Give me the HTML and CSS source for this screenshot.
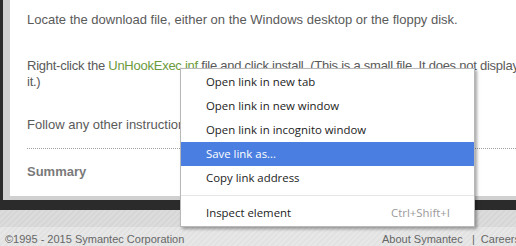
FILE: index.html
```html
<!DOCTYPE html>
<html lang="en">
<head>
    <meta charset="UTF-8">
    <title>UnHookExec - Symantec</title>
    <link rel="stylesheet" href="styles.css">
</head>
<body>

<div class="page">
    <div class="frame">
        <div class="frame-inner">
            <div class="content">
                <p class="step">Locate the download file, either on the Windows desktop or the floppy disk.</p>
                <p class="step step-install">Right-click the <a href="#" class="file-link">UnHookExec.inf</a> file and click install. (This is a small file. It does not display a message when you install<br>it.)</p>
                <p class="step">Follow any other instructions that appear on the screen.</p>
                <div class="divider"></div>
                <h3 class="summary">Summary</h3>
            </div>
        </div>
    </div>

    <div class="band"></div>

    <footer>
        <span>&copy;1995 - 2015 Symantec Corporation</span>
        <span class="footer-links">About Symantec &nbsp;&nbsp;|&nbsp; Careers</span>
    </footer>
</div>

<!-- Контекстное меню -->
<div class="context-menu">
    <div class="menu-item">Open link in new tab</div>
    <div class="menu-item">Open link in new window</div>
    <div class="menu-item">Open link in incognito window</div>
    <div class="menu-item active">Save link as...</div>
    <div class="menu-item">Copy link address</div>
    <div class="menu-sep"></div>
    <div class="menu-item">Inspect element <span class="shortcut">Ctrl+Shift+I</span></div>
</div>

</body>
</html>
```

FILE: styles.css
```css
body {
    margin: 0;
    font-family: 'Liberation Sans', Arial, sans-serif;
    background: #e4e4e4;
    overflow: hidden;
    position: relative;
}

.page {
    width: 540px;
}

.frame {
    background-color: #2b2b2b;
    padding: 0 0 10px 3px;
}

.frame-inner {
    background-color: #d0d0d0;
    padding: 0 0 4px 7px;
}

.content {
    background-color: #fff;
    height: 196px;
    padding: 12px 0 0 17px;
    box-sizing: border-box;
    color: #5a5a5a;
    font-size: 13px;
    line-height: 16px;
}

.step {
    margin: 0 0 30px;
    white-space: nowrap;
}

.step-install {
    margin-bottom: 27px;
    letter-spacing: -0.25px;
}

.step:nth-child(3) {
    margin-bottom: 15px;
}

.file-link {
    color: #6b9a3c;
    text-decoration: none;
}

.divider {
    border-top: 1px dotted #a0a0a0;
    margin-right: 10px;
}

.summary {
    margin: 15px 0 0;
    font-size: 13px;
    line-height: 16px;
    color: #7a7a7a;
}

.band {
    height: 17px;
    background: repeating-linear-gradient(135deg, #d6d6d6 0, #d6d6d6 2px, #dcdcdc 2px, #dcdcdc 4px);
}

footer {
    height: 19px;
    display: flex;
    justify-content: space-between;
    align-items: flex-end;
    padding: 0 20px 0 5px;
    font-size: 11px;
    line-height: 13px;
    color: #666;
    background: repeating-linear-gradient(135deg, #e2e2e2 0, #e2e2e2 2px, #e7e7e7 2px, #e7e7e7 4px);
}

/* Контекстное меню */
.context-menu {
    position: absolute;
    left: 180px;
    top: 68px;
    width: 293px;
    padding: 1px 0;
    background-color: #fff;
    border: 1px solid #b8b8b8;
    box-shadow: 2px 2px 3px rgba(0, 0, 0, 0.35);
    font-family: 'Open Sans', 'Noto Sans', sans-serif;
    font-size: 11.4px;
    color: #222;
}

.menu-item {
    height: 24px;
    line-height: 24px;
    padding: 0 24px 0 25px;
    display: flex;
    justify-content: space-between;
}

.menu-item.active {
    background-color: #4a7ee0;
    color: #fff;
}

.shortcut {
    color: #9a9a9a;
}

.menu-sep {
    height: 1px;
    margin: 5px 0;
    background-color: #e6e6e6;
}
```
